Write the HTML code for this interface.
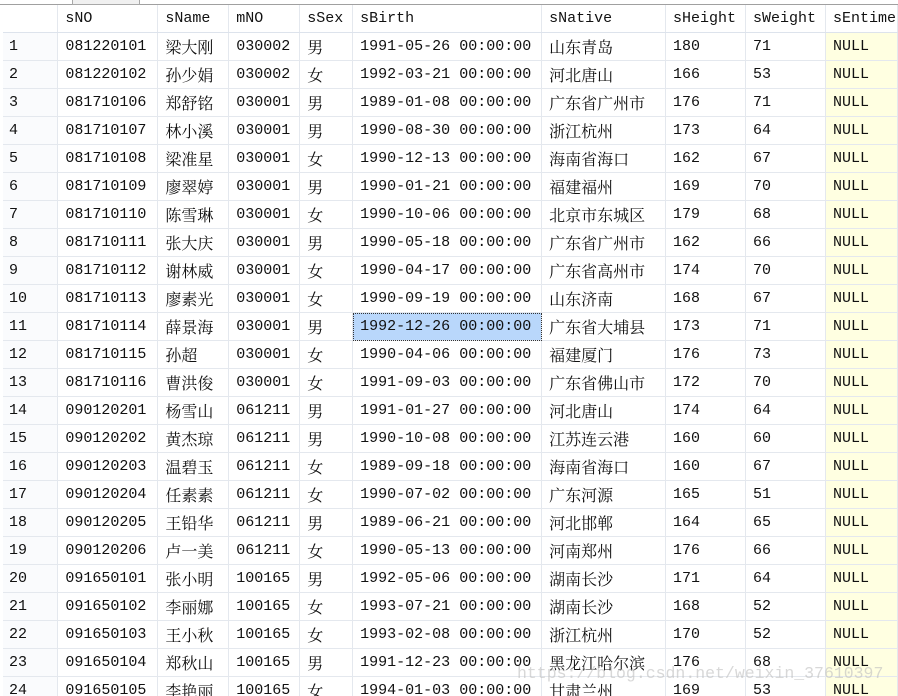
<!DOCTYPE html>
<html><head><meta charset="utf-8"><style>
html,body{margin:0;padding:0;background:#fff;width:898px;height:696px;overflow:hidden;position:relative}
.top{position:absolute;left:0;top:0;width:898px;height:4px;background:#fff;border-bottom:1px solid #a0a0a0}
.tab{position:absolute;left:72px;top:-1px;width:66px;height:4px;border:1px solid #a8a8a8;background:#f0f0f0}
table{position:absolute;left:3px;top:5px;border-collapse:collapse;table-layout:fixed;font-family:"Liberation Mono","Noto Serif CJK SC",monospace;font-size:15px;color:#111}
td{height:27px;border-right:1px solid #e4e8ee;border-bottom:1px solid #e4e8ee;padding:0 0 0 7px;white-space:nowrap;overflow:hidden;line-height:27px}
tr.h td{background:#fff;height:26px;border-bottom:1px solid #dde3ec}
td.n{background:#fafbfd;border-right:1px solid #e4e8ee;padding-left:6px}
td.e{background:#ffffe1}
td.sel{background:#b9d7fb;outline:1px dotted #333;outline-offset:-1px}
.cj{font-family:"Noto Serif CJK SC","Noto Sans CJK SC",serif;font-size:16px;line-height:25px}
.wm{position:absolute;left:517px;top:664px;font-family:"Liberation Mono",monospace;font-size:16.5px;color:rgba(190,190,190,0.6);white-space:nowrap}
</style></head><body>
<div class="top"></div><div class="tab"></div>
<table>
<colgroup><col style="width:55px"><col style="width:100px"><col style="width:71px"><col style="width:71px"><col style="width:53px"><col style="width:189px"><col style="width:124px"><col style="width:80px"><col style="width:80px"><col style="width:72px"></colgroup>
<tr class="h"><td class="n"></td><td>sNO</td><td>sName</td><td>mNO</td><td>sSex</td><td>sBirth</td><td>sNative</td><td>sHeight</td><td>sWeight</td><td>sEntime</td></tr>
<tr><td class="n">1</td><td>081220101</td><td class="cj">梁大刚</td><td>030002</td><td class="cj">男</td><td>1991-05-26 00:00:00</td><td class="cj">山东青岛</td><td>180</td><td>71</td><td class="e">NULL</td></tr>
<tr><td class="n">2</td><td>081220102</td><td class="cj">孙少娟</td><td>030002</td><td class="cj">女</td><td>1992-03-21 00:00:00</td><td class="cj">河北唐山</td><td>166</td><td>53</td><td class="e">NULL</td></tr>
<tr><td class="n">3</td><td>081710106</td><td class="cj">郑舒铭</td><td>030001</td><td class="cj">男</td><td>1989-01-08 00:00:00</td><td class="cj">广东省广州市</td><td>176</td><td>71</td><td class="e">NULL</td></tr>
<tr><td class="n">4</td><td>081710107</td><td class="cj">林小溪</td><td>030001</td><td class="cj">男</td><td>1990-08-30 00:00:00</td><td class="cj">浙江杭州</td><td>173</td><td>64</td><td class="e">NULL</td></tr>
<tr><td class="n">5</td><td>081710108</td><td class="cj">梁准星</td><td>030001</td><td class="cj">女</td><td>1990-12-13 00:00:00</td><td class="cj">海南省海口</td><td>162</td><td>67</td><td class="e">NULL</td></tr>
<tr><td class="n">6</td><td>081710109</td><td class="cj">廖翠婷</td><td>030001</td><td class="cj">男</td><td>1990-01-21 00:00:00</td><td class="cj">福建福州</td><td>169</td><td>70</td><td class="e">NULL</td></tr>
<tr><td class="n">7</td><td>081710110</td><td class="cj">陈雪琳</td><td>030001</td><td class="cj">女</td><td>1990-10-06 00:00:00</td><td class="cj">北京市东城区</td><td>179</td><td>68</td><td class="e">NULL</td></tr>
<tr><td class="n">8</td><td>081710111</td><td class="cj">张大庆</td><td>030001</td><td class="cj">男</td><td>1990-05-18 00:00:00</td><td class="cj">广东省广州市</td><td>162</td><td>66</td><td class="e">NULL</td></tr>
<tr><td class="n">9</td><td>081710112</td><td class="cj">谢林威</td><td>030001</td><td class="cj">女</td><td>1990-04-17 00:00:00</td><td class="cj">广东省高州市</td><td>174</td><td>70</td><td class="e">NULL</td></tr>
<tr><td class="n">10</td><td>081710113</td><td class="cj">廖素光</td><td>030001</td><td class="cj">女</td><td>1990-09-19 00:00:00</td><td class="cj">山东济南</td><td>168</td><td>67</td><td class="e">NULL</td></tr>
<tr><td class="n">11</td><td>081710114</td><td class="cj">薛景海</td><td>030001</td><td class="cj">男</td><td class="sel">1992-12-26 00:00:00</td><td class="cj">广东省大埔县</td><td>173</td><td>71</td><td class="e">NULL</td></tr>
<tr><td class="n">12</td><td>081710115</td><td class="cj">孙超</td><td>030001</td><td class="cj">女</td><td>1990-04-06 00:00:00</td><td class="cj">福建厦门</td><td>176</td><td>73</td><td class="e">NULL</td></tr>
<tr><td class="n">13</td><td>081710116</td><td class="cj">曹洪俊</td><td>030001</td><td class="cj">女</td><td>1991-09-03 00:00:00</td><td class="cj">广东省佛山市</td><td>172</td><td>70</td><td class="e">NULL</td></tr>
<tr><td class="n">14</td><td>090120201</td><td class="cj">杨雪山</td><td>061211</td><td class="cj">男</td><td>1991-01-27 00:00:00</td><td class="cj">河北唐山</td><td>174</td><td>64</td><td class="e">NULL</td></tr>
<tr><td class="n">15</td><td>090120202</td><td class="cj">黄杰琼</td><td>061211</td><td class="cj">男</td><td>1990-10-08 00:00:00</td><td class="cj">江苏连云港</td><td>160</td><td>60</td><td class="e">NULL</td></tr>
<tr><td class="n">16</td><td>090120203</td><td class="cj">温碧玉</td><td>061211</td><td class="cj">女</td><td>1989-09-18 00:00:00</td><td class="cj">海南省海口</td><td>160</td><td>67</td><td class="e">NULL</td></tr>
<tr><td class="n">17</td><td>090120204</td><td class="cj">任素素</td><td>061211</td><td class="cj">女</td><td>1990-07-02 00:00:00</td><td class="cj">广东河源</td><td>165</td><td>51</td><td class="e">NULL</td></tr>
<tr><td class="n">18</td><td>090120205</td><td class="cj">王铅华</td><td>061211</td><td class="cj">男</td><td>1989-06-21 00:00:00</td><td class="cj">河北邯郸</td><td>164</td><td>65</td><td class="e">NULL</td></tr>
<tr><td class="n">19</td><td>090120206</td><td class="cj">卢一美</td><td>061211</td><td class="cj">女</td><td>1990-05-13 00:00:00</td><td class="cj">河南郑州</td><td>176</td><td>66</td><td class="e">NULL</td></tr>
<tr><td class="n">20</td><td>091650101</td><td class="cj">张小明</td><td>100165</td><td class="cj">男</td><td>1992-05-06 00:00:00</td><td class="cj">湖南长沙</td><td>171</td><td>64</td><td class="e">NULL</td></tr>
<tr><td class="n">21</td><td>091650102</td><td class="cj">李丽娜</td><td>100165</td><td class="cj">女</td><td>1993-07-21 00:00:00</td><td class="cj">湖南长沙</td><td>168</td><td>52</td><td class="e">NULL</td></tr>
<tr><td class="n">22</td><td>091650103</td><td class="cj">王小秋</td><td>100165</td><td class="cj">女</td><td>1993-02-08 00:00:00</td><td class="cj">浙江杭州</td><td>170</td><td>52</td><td class="e">NULL</td></tr>
<tr><td class="n">23</td><td>091650104</td><td class="cj">郑秋山</td><td>100165</td><td class="cj">男</td><td>1991-12-23 00:00:00</td><td class="cj">黑龙江哈尔滨</td><td>176</td><td>68</td><td class="e">NULL</td></tr>
<tr><td class="n">24</td><td>091650105</td><td class="cj">李艳丽</td><td>100165</td><td class="cj">女</td><td>1994-01-03 00:00:00</td><td class="cj">甘肃兰州</td><td>169</td><td>53</td><td class="e">NULL</td></tr>
</table>
<div class="wm">https://blog.csdn.net/weixin_37610397</div>
</body></html>
